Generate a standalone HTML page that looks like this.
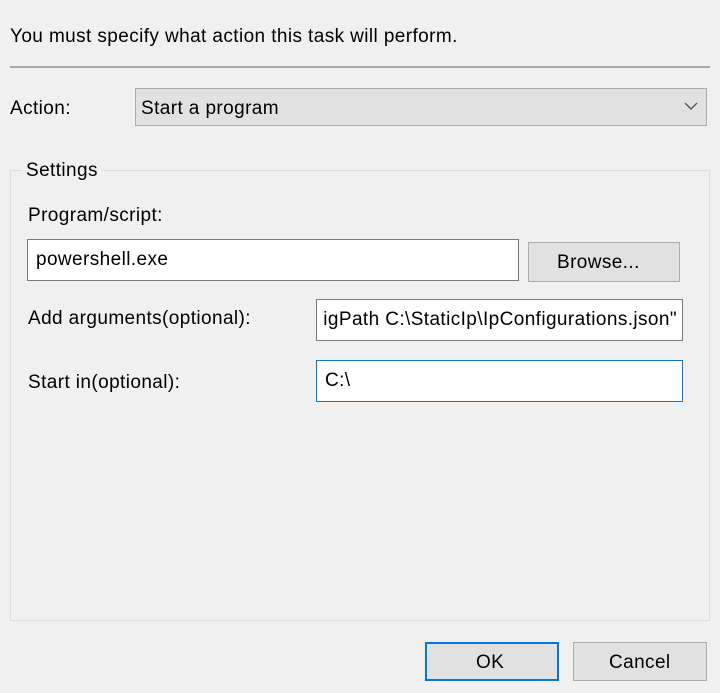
<!DOCTYPE html>
<html><head><style>
body{margin:0;width:720px;height:693px;background:#f0f0f0;font-family:"Liberation Sans",sans-serif;font-size:19px;letter-spacing:0.4px;color:#000;position:relative;overflow:hidden}
.a{position:absolute;white-space:nowrap}
.box{position:absolute;box-sizing:border-box}
</style></head><body>
<div class="a" style="left:10px;top:26px">You must specify what action this task will perform.</div>
<div class="box" style="left:10px;top:66px;width:700px;height:2px;background:#a8a8a8"></div>
<div class="a" style="left:10px;top:98px">Action:</div>
<div class="box" style="left:135px;top:88px;width:572px;height:38px;background:#e1e1e1;border:1px solid #adadad"></div>
<div class="a" style="left:141px;top:98px">Start a program</div>
<svg class="a" style="left:683px;top:100px" width="16" height="12"><path d="M2 3 L8 9 L14 3" fill="none" stroke="#555" stroke-width="1.4"/></svg>
<div class="box" style="left:10px;top:170px;width:700px;height:451px;border:1px solid #dcdcdc"></div>
<div class="a" style="left:22px;top:160px;background:#f0f0f0;padding:0 4px">Settings</div>
<div class="a" style="left:28px;top:205px">Program/script:</div>
<div class="box" style="left:27px;top:239px;width:492px;height:42px;background:#fff;border:1px solid #7a7a7a"></div>
<div class="a" style="left:36px;top:249px">powershell.exe</div>
<div class="box" style="left:528px;top:242px;width:152px;height:40px;background:#e1e1e1;border:1px solid #adadad"></div>
<div class="a" style="left:557px;top:252px">Browse...</div>
<div class="a" style="left:28px;top:308px">Add arguments(optional):</div>
<div class="box" style="left:316px;top:299px;width:367px;height:42px;background:#fff;border:1px solid #7a7a7a;overflow:hidden">
<div class="a" style="right:5px;top:9px">igPath C:\StaticIp\IpConfigurations.json"</div></div>
<div class="a" style="left:28px;top:372px">Start in(optional):</div>
<div class="box" style="left:316px;top:360px;width:367px;height:42px;background:#fff;border:1px solid #0078d7"></div>
<div class="a" style="left:325px;top:370px">C:\</div>
<div class="box" style="left:425px;top:642px;width:134px;height:39px;background:#e1e1e1;border:2px solid #0078d7"></div>
<div class="a" style="left:476px;top:652px">OK</div>
<div class="box" style="left:573px;top:642px;width:134px;height:39px;background:#e1e1e1;border:1px solid #adadad"></div>
<div class="a" style="left:609px;top:652px">Cancel</div>
</body></html>
